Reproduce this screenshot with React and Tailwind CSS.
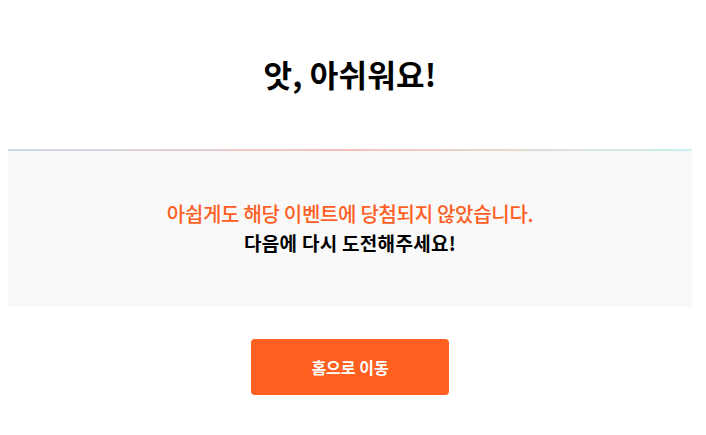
export default function App() {
  return (
    <div className="min-h-screen bg-white" style={{ fontFamily: '"Noto Sans CJK KR", "Noto Sans", sans-serif' }}>
      <div className="ml-2 w-[684px] pt-[52px]">
        <h1 className="text-center text-[31px] font-bold leading-[44px] tracking-[0.2px] text-black">앗, 아쉬워요!</h1>
        <div className="mt-[53px] h-[2px] bg-gradient-to-r from-[#cdd9ef] via-[#f6c2b8] to-[#c8f2ef]" />
        <div className="flex h-[156px] flex-col items-center justify-center bg-[#f9f9f9] pb-[3px]">
          <p className="text-[20px] font-medium leading-[29px] tracking-[-0.3px] text-[#ff5f24]">아쉽게도 해당 이벤트에 당첨되지 않았습니다.</p>
          <p className="text-[19px] font-semibold leading-[29px] tracking-[0.3px] text-black">다음에 다시 도전해주세요!</p>
        </div>
        <div className="mt-[32px] flex justify-center">
          <button className="h-[56px] w-[198px] rounded-[4px] bg-[#ff5f1f] text-[16px] font-bold text-white">홈으로 이동</button>
        </div>
      </div>
    </div>
  )
}
